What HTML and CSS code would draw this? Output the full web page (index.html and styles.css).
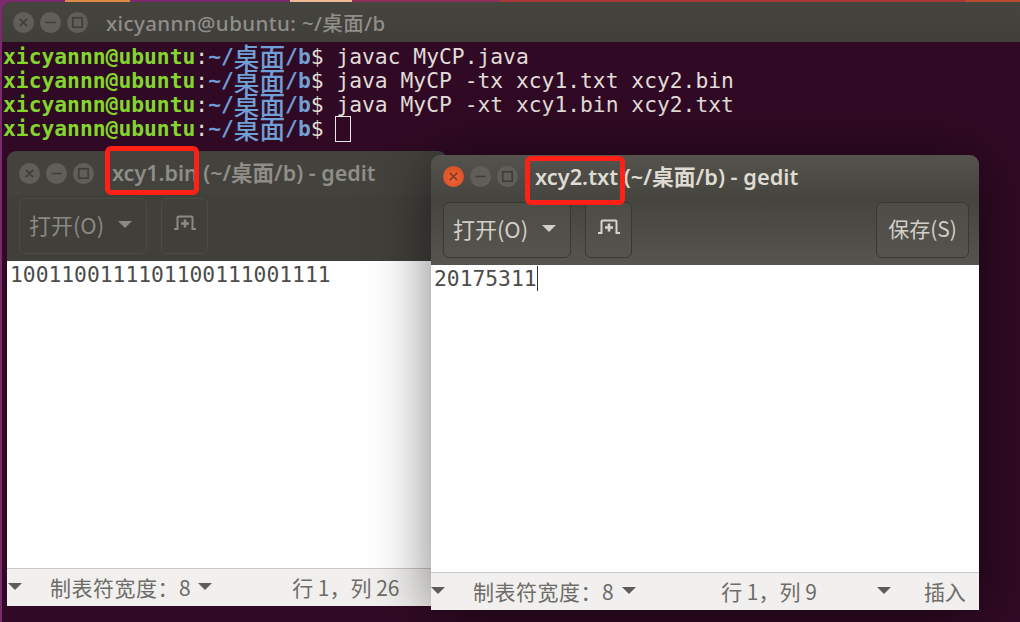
FILE: index.html
```html
<!DOCTYPE html>
<html lang="zh">
<head>
<meta charset="utf-8">
<title>gedit</title>
<link rel="stylesheet" href="styles.css">
</head>
<body>
<section class="term">
  <header class="term-title">
    <div class="dots">
      <span class="dot"><svg viewBox="0 0 20 20"><path d="M6.500 6.500l7 7M13.500 6.500l-7 7"/></svg></span>
      <span class="dot"><svg viewBox="0 0 20 20"><path d="M5 10h10"/></svg></span>
      <span class="dot"><svg viewBox="0 0 20 20"><rect x="5.500" y="5.500" width="9" height="9"/></svg></span>
    </div>
    <span class="term-name">xicyannn@ubuntu: ~/桌面/b</span>
  </header>
  <div class="term-body">
    <div class="line"><b class="u">xicyannn@ubuntu</b><span>:</span><b class="p">~/<i>桌面</i>/b</b><span>$ javac MyCP.java</span></div>
    <div class="line"><b class="u">xicyannn@ubuntu</b><span>:</span><b class="p">~/<i>桌面</i>/b</b><span>$ java MyCP -tx xcy1.txt xcy2.bin</span></div>
    <div class="line"><b class="u">xicyannn@ubuntu</b><span>:</span><b class="p">~/<i>桌面</i>/b</b><span>$ java MyCP -xt xcy1.bin xcy2.txt</span></div>
    <div class="line"><b class="u">xicyannn@ubuntu</b><span>:</span><b class="p">~/<i>桌面</i>/b</b><span>$ </span><span class="cursor"></span></div>
  </div>
</section>

<section class="win win-back">
  <header class="win-title">
    <div class="dots">
      <span class="dot"><svg viewBox="0 0 20 20"><path d="M6.500 6.500l7 7M13.500 6.500l-7 7"/></svg></span>
      <span class="dot"><svg viewBox="0 0 20 20"><path d="M5 10h10"/></svg></span>
      <span class="dot"><svg viewBox="0 0 20 20"><rect x="5.500" y="5.500" width="9" height="9"/></svg></span>
    </div>
    <span class="win-name">xcy1.bin (~/桌面/b) - gedit</span>
  </header>
  <div class="toolbar">
    <button class="btn btn-open">打开(O)<span class="tri tri-light"></span></button>
    <button class="btn btn-tab"><svg viewBox="0 0 24 24"><path d="M1 17h3.500V5.500a1 1 0 0 1 1-1h13a1 1 0 0 1 1 1V17H23"/><path class="plus" d="M12 7.500v8M8 11.500h8"/></svg></button>
  </div>
  <div class="doc">1001100111101100111001111</div>
  <footer class="status">
    <span class="tri tri-dark"></span>
    <span class="tab-label">制表符宽度：8</span>
    <span class="tri tri-dark tri-tab"></span>
    <span class="pos">行 1，列 26</span>
  </footer>
</section>

<section class="win win-front">
  <header class="win-title">
    <div class="dots">
      <span class="dot dot-close"><svg viewBox="0 0 20 20"><path d="M6.500 6.500l7 7M13.500 6.500l-7 7"/></svg></span>
      <span class="dot"><svg viewBox="0 0 20 20"><path d="M5 10h10"/></svg></span>
      <span class="dot"><svg viewBox="0 0 20 20"><rect x="5.500" y="5.500" width="9" height="9"/></svg></span>
    </div>
    <span class="win-name">xcy2.txt (~/桌面/b) - gedit</span>
  </header>
  <div class="toolbar">
    <button class="btn btn-open">打开(O)<span class="tri tri-light"></span></button>
    <button class="btn btn-tab"><svg viewBox="0 0 24 24"><path d="M1 17h3.500V5.500a1 1 0 0 1 1-1h13a1 1 0 0 1 1 1V17H23"/><path class="plus" d="M12 7.500v8M8 11.500h8"/></svg></button>
    <button class="btn btn-save">保存(S)</button>
  </div>
  <div class="doc">20175311<span class="caret"></span></div>
  <footer class="status">
    <span class="tri tri-dark"></span>
    <span class="tab-label">制表符宽度：8</span>
    <span class="tri tri-dark tri-tab"></span>
    <span class="pos">行 1，列 9</span>
    <span class="tri tri-dark tri-mode"></span>
    <span class="mode">插入</span>
  </footer>
</section>

<div class="mark mark-back"></div>
<div class="mark mark-front"></div>
</body>
</html>
```
FILE: styles.css
```css
* { box-sizing: border-box; }
html, body { margin: 0; height: 100%; }
body {
  position: relative;
  width: 1020px;
  height: 622px;
  overflow: hidden;
  font-family: "Noto Sans", "Noto Sans CJK SC", sans-serif;
  background: linear-gradient(90deg, #7c2a6e 0 65px, #e08a48 65px 130px, #7c2a6e 130px 290px, #eebb94 290px 352px, #8e2f5c 352px 500px, #a83838 500px 965px, #b84a30 965px);
}

/* terminal */
.term {
  position: absolute;
  left: 2px;
  top: 2px;
  width: 1030px;
  height: 640px;
  border-radius: 9px 9px 0 0;
  overflow: hidden;
  background: #300a24;
}
.term-title {
  height: 40px;
  display: flex;
  align-items: center;
  background: linear-gradient(#45443f, #403f3a);
  padding-left: 11px;
}
.term-name {
  margin-left: 18px;
  font-size: 20.500px;
  font-weight: 500;
  color: #8f8e89;
  letter-spacing: .4px;
}
.term-body {
  padding: 3px 0 0 1px;
  font-family: "DejaVu Sans Mono", "Noto Sans CJK SC", monospace;
  font-size: 21.300px;
  line-height: 24px;
  color: #e0dcd8;
}
.line { height: 24px; white-space: pre; display: flex; }
.u { color: #82d62e; font-weight: bold; }
.p { color: #6f9fd4; font-weight: bold; height: 24px; }
.p i {
  display: inline-block;
  vertical-align: top;
  height: 24px;
  font-style: normal;
  font-family: "Noto Sans CJK SC", sans-serif;
  font-size: 25.650px;
  font-weight: 500;
  line-height: 22px;
}
.cursor {
  display: block;
  width: 16px;
  height: 26px;
  margin: -1px 0 0 -1px;
  border: 1.500px solid #e8e8e8;
}

/* window buttons */
.dots { display: flex; gap: 6px; }
.dot {
  width: 21px;
  height: 21px;
  border-radius: 50%;
  background: #5f5e59;
  display: block;
}
.dot svg {
  display: block;
  width: 21px;
  height: 21px;
  fill: none;
  stroke: #3f3e3a;
  stroke-width: 1.600;
}
.dot-close { background: radial-gradient(circle at 50% 60%, #e8673a, #d9491f); }
.dot-close svg { stroke: #8a3a22; }

/* gedit windows */
.win {
  position: absolute;
  display: flex;
  flex-direction: column;
  border-radius: 9px 9px 0 0;
  overflow: hidden;
}
.win-back { left: 7px; top: 151px; width: 440px; height: 455px; }
.win-front {
  left: 431px;
  top: 155px;
  width: 548px;
  height: 455px;
  box-shadow: 0 4px 60px rgba(0, 0, 0, .5);
}
.win-title {
  height: 44px;
  display: flex;
  align-items: center;
  padding: 0 0 0 12px;
  background: #43423d;
}
.win-name {
  margin: -4px 0 0 18px;
  font-size: 21.500px;
  font-weight: 600;
  white-space: pre;
  color: #8e8d88;
}
.win-front .win-name { color: #dfdbd2; margin-left: 17px; font-size: 21.800px; }
.win-front .win-title { background: linear-gradient(#54534d, #45443f); }
.win-front .dots { margin-top: -2px; }
.toolbar {
  height: 66px;
  display: flex;
  align-items: flex-start;
  gap: 14px;
  padding: 3px 10px 0 12px;
  background: #403f3a;
}
.win-front .toolbar { background: linear-gradient(#45443f, #55544e); }
.btn {
  height: 56px;
  padding: 0 0 4px;
  border: 1px solid #4b4a45;
  border-radius: 6px;
  background: #403f3a;
  color: #8a8984;
  font: 22px "Noto Sans CJK SC", "Noto Sans", sans-serif;
  display: flex;
  align-items: center;
  justify-content: center;
}
.win-front .btn {
  border-color: #393833;
  background: linear-gradient(#4d4c46, #54534d);
  color: #d2cfc8;
}
.btn-open { width: 128px; gap: 14px; padding-right: 5px; }
.btn-tab { width: 47px; }
.btn-save { width: 93px; margin-left: auto; font-size: 21px; }
.btn svg {
  width: 24px;
  height: 24px;
  fill: none;
  stroke: #8a8984;
  stroke-width: 2;
}
.btn svg .plus { stroke-width: 2.600; }
.win-front .btn svg { stroke: #d8d5ce; }
.tri {
  display: block;
  width: 0;
  height: 0;
  border-left: 7px solid transparent;
  border-right: 7px solid transparent;
  border-top: 7px solid #8a8984;
}
.win-front .tri-light { border-top-color: #d2cfc8; }
.tri-dark { border-top-color: #5d5c58; }
.doc {
  flex: 1;
  background: #fff;
  padding: 0 0 0 3px;
  font-family: "DejaVu Sans Mono", monospace;
  font-size: 21.300px;
  line-height: 27px;
  color: #4c4c4a;
}
.caret {
  display: inline-block;
  width: 1px;
  height: 25px;
  vertical-align: -5px;
  background: #333;
}
.status {
  height: 38px;
  display: flex;
  align-items: center;
  border-top: 1px solid #c8c7c3;
  background: #f1f0ee;
  color: #6d6c68;
  font: 21px "Noto Sans CJK SC", "Noto Sans", sans-serif;
  padding: 0 0 2px 1px;
  white-space: pre;
}
.win-front .status { padding-left: 0; }
.tab-label { margin-left: 28px; letter-spacing: .5px; }
.tri-tab { margin-left: 7px; }
.pos { margin-left: 80px; }
.win-front .tri-tab { margin-left: 8px; }
.win-front .pos { margin-left: 85px; }
.tri-mode { margin-left: 60px; }
.mode { margin-left: 33px; }

/* red annotation boxes */
.mark {
  position: absolute;
  border: 5px solid #ff2016;
  border-radius: 6px;
}
.mark-back { left: 105px; top: 146px; width: 94px; height: 49px; }
.mark-front { left: 525px; top: 156px; width: 100px; height: 49px; }
```
